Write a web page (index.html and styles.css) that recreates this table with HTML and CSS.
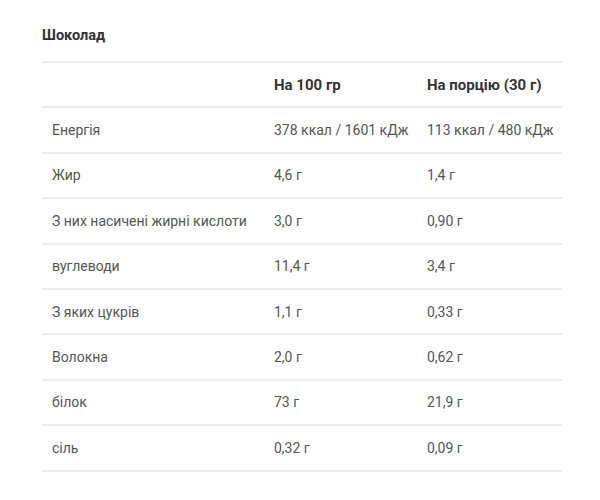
FILE: index.html
```html
<!DOCTYPE html>
<html lang="uk">
<head>
<meta charset="utf-8">
<link rel="stylesheet" href="styles.css">
</head>
<body>
<div class="panel">
  <h3 class="title">Шоколад</h3>
  <table class="nutri">
    <thead>
      <tr><th></th><th>На 100 гр</th><th>На порцію (30 г)</th></tr>
    </thead>
    <tbody>
      <tr><td>Енергія</td><td>378 ккал / 1601 кДж</td><td>113 ккал / 480 кДж</td></tr>
      <tr><td>Жир</td><td>4,6 г</td><td>1,4 г</td></tr>
      <tr><td>З них насичені жирні кислоти</td><td>3,0 г</td><td>0,90 г</td></tr>
      <tr><td>вуглеводи</td><td>11,4 г</td><td>3,4 г</td></tr>
      <tr><td>З яких цукрів</td><td>1,1 г</td><td>0,33 г</td></tr>
      <tr><td>Волокна</td><td>2,0 г</td><td>0,62 г</td></tr>
      <tr><td>білок</td><td>73 г</td><td>21,9 г</td></tr>
      <tr><td>сіль</td><td>0,32 г</td><td>0,09 г</td></tr>
    </tbody>
  </table>
</div>
</body>
</html>
```
FILE: styles.css
```css
html, body { margin: 0; padding: 0; background: #fff; }
body { font-family: Roboto, "Noto Sans", sans-serif; color: #555; }
.panel { padding: 27px 0 0 42px; width: 520px; }
.title { margin: 0 0 16px; font-size: 14.5px; font-weight: 700; color: #333; line-height: 18px; }
.nutri { width: 520px; border-collapse: collapse; border-top: 2px solid #ececec; font-size: 14px; table-layout: fixed; }
.nutri th, .nutri td { text-align: left; height: 43.4px; padding: 0 0 0 10px; border-bottom: 2px solid #ececec; vertical-align: middle; white-space: nowrap; line-height: 16px; }
.nutri th { font-weight: 700; color: #333; font-size: 15px; }
.nutri th:nth-child(1) { width: 212px; }
.nutri th:nth-child(2) { width: 143px; }
.nutri td { font-weight: 400; }
```
